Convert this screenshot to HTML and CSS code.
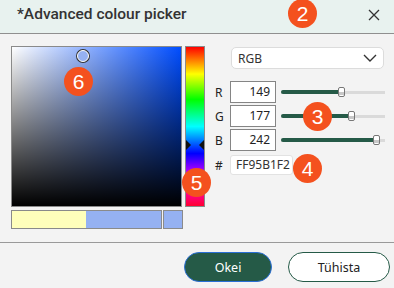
FILE: index.html
```html
<!DOCTYPE html>
<html>
<head>
<meta charset="utf-8">
<link rel="stylesheet" href="styles.css">
</head>
<body>
<div class="dialog">
  <div class="header">
    <div class="title">*Advanced colour picker</div>
    <div class="close">
      <svg width="12" height="12" viewBox="0 0 12 12"><path d="M1 1L11 11M11 1L1 11" stroke="#333" stroke-width="1.3" fill="none"/></svg>
    </div>
  </div>
  <div class="main">
    <div class="left">
      <div class="top">
        <div class="sv">
          <div class="marker" style="left:65px;top:3px"></div>
        </div>
        <div class="hue">
          <div class="arrow arrow-l" style="top:93px"></div>
          <div class="arrow arrow-r" style="top:93px"></div>
        </div>
      </div>
      <div class="preview">
        <div class="compare">
          <div class="old"></div>
          <div class="new"></div>
        </div>
        <div class="swatch"></div>
      </div>
    </div>
    <div class="right">
      <div class="select">
        <span>RGB</span>
        <svg width="14" height="8" viewBox="0 0 14 8"><path d="M1 1L7 7L13 1" stroke="#333" stroke-width="1.4" fill="none"/></svg>
      </div>
      <div class="rows">
        <div class="row">
          <span class="lbl">R</span>
          <div class="num">149</div>
          <div class="slider"><div class="fill" style="width:58%"></div><div class="thumb" style="left:57px"></div></div>
        </div>
        <div class="row">
          <span class="lbl">G</span>
          <div class="num">177</div>
          <div class="slider"><div class="fill" style="width:69%"></div><div class="thumb" style="left:67px"></div></div>
        </div>
        <div class="row">
          <span class="lbl">B</span>
          <div class="num">242</div>
          <div class="slider"><div class="fill" style="width:93%"></div><div class="thumb" style="left:92px"></div></div>
        </div>
        <div class="row hexrow">
          <span class="lbl">#</span>
          <div class="hex">FF95B1F2</div>
        </div>
      </div>
    </div>
  </div>
  <div class="footer">
    <button class="btn ok">Okei</button>
    <button class="btn cancel">Tühista</button>
  </div>
  <div class="badge b2">2</div>
  <div class="badge b3">3</div>
  <div class="badge b4">4</div>
  <div class="badge b5">5</div>
  <div class="badge b6">6</div>
</div>
</body>
</html>
```

FILE: styles.css
```css
* { box-sizing: border-box; }
html, body { margin: 0; padding: 0; }
body {
  width: 394px;
  height: 288px;
  overflow: hidden;
  background: #f3f3f3;
  font-family: "Noto Sans", "Open Sans", sans-serif;
  color: #222;
}
.dialog {
  position: relative;
  width: 394px;
  height: 288px;
  display: flex;
  flex-direction: column;
}
.header {
  height: 34px;
  background: #e8f2ef;
  border-bottom: 1px solid #8f8f8f;
  display: flex;
  align-items: center;
  justify-content: space-between;
  padding: 0 14px 0 17px;
  flex: none;
}
.title {
  font-family: Roboto, "Liberation Sans", sans-serif;
  font-weight: 500;
  font-size: 15.5px;
  color: #333;
  margin-top: -6px;
}
.close {
  width: 12px;
  height: 12px;
  display: flex;
  margin-top: -4px;
}
.main {
  height: 209px;
  border-bottom: 1px solid #999;
  display: flex;
  padding: 12px 0 0 11px;
  flex: none;
}
.left {
  display: flex;
  flex-direction: column;
  gap: 3px;
}
.top {
  display: flex;
  gap: 3px;
}
.sv {
  position: relative;
  width: 171px;
  height: 161px;
  border: 1px solid #8a8a8a;
  background:
    linear-gradient(to top, #000, rgba(0,0,0,0)),
    linear-gradient(to right, #fff, rgb(0,77,255));
}
.marker {
  position: absolute;
  width: 12px;
  height: 12px;
  border-radius: 50%;
  background: #95b1f2;
  border: 1px solid #fff;
  box-shadow: 0 0 0 1px #333;
}
.hue {
  position: relative;
  width: 20px;
  height: 161px;
  border: 1px solid #8a8a8a;
  background: linear-gradient(to bottom, #ff0000 0%, #ffff00 17%, #00ff00 33%, #00ffff 50%, #0000ff 67%, #ff00ff 83%, #ff0030 100%);
}
.arrow {
  position: absolute;
  width: 0;
  height: 0;
  border-top: 5px solid transparent;
  border-bottom: 5px solid transparent;
}
.arrow-l { left: 0; border-left: 5px solid #111; }
.arrow-r { right: 0; border-right: 5px solid #111; }
.preview {
  display: flex;
  gap: 1px;
  height: 19px;
}
.compare {
  width: 151px;
  display: flex;
  border: 1px solid #8a8a8a;
}
.old { width: 74px; background: #ffffbb; }
.new { flex: 1; background: #95b1f2; }
.swatch {
  width: 20px;
  background: #95b1f2;
  border: 1px solid #8a8a8a;
}
.right {
  margin-left: 10px;
  display: flex;
  flex-direction: column;
  padding-top: 1px;
}
.select {
  margin-left: 16px;
  width: 153px;
  height: 22px;
  background: #fff;
  border: 1px solid #dcdcdc;
  border-radius: 5px;
  display: flex;
  align-items: center;
  justify-content: space-between;
  padding: 0 6px 0 6px;
  font-size: 12px;
  color: #333;
}
.rows {
  margin-top: 12px;
  display: flex;
  flex-direction: column;
  gap: 2px;
}
.row {
  display: flex;
  align-items: center;
  height: 22px;
}
.lbl {
  width: 15px;
  font-size: 12px;
  color: #222;
  padding-left: 0;
}
.num {
  width: 46px;
  height: 22px;
  background: #fff;
  border: 1px solid #858585;
  text-align: right;
  padding-right: 5px;
  font-size: 12px;
  line-height: 20px;
  color: #222;
}
.slider {
  position: relative;
  margin-left: 5px;
  width: 104px;
  height: 3px;
  background: #dadada;
}
.fill {
  position: absolute;
  left: 0;
  top: -0.5px;
  height: 4px;
  background: #255a47;
  border-radius: 2px;
}
.thumb {
  position: absolute;
  top: -4px;
  width: 7px;
  height: 10px;
  border: 1px solid #777;
  border-radius: 2px;
  background: linear-gradient(to bottom, #fff 45%, #c8c8c8 45%, #c8c8c8 85%, #fff 85%);
}
.hexrow {
  margin-top: 2px;
  height: 20px;
}
.hex {
  width: 63px;
  height: 20px;
  background: #fff;
  border: 1px solid #e2e2e2;
  border-radius: 3px;
  padding-left: 5px;
  font-size: 12px;
  line-height: 18px;
  color: #333;
}
.footer {
  display: flex;
  justify-content: flex-end;
  gap: 16px;
  padding: 9px 4px 0 0;
}
.btn {
  height: 30px;
  border-radius: 15px;
  font-family: "Noto Sans", "Open Sans", sans-serif;
  font-size: 12.5px;
  padding: 0;
}
.ok {
  width: 88px;
  background: #255a47;
  color: #fff;
  border: 1px solid #2a6fd6;
}
.cancel {
  width: 102px;
  background: #fff;
  color: #222;
  border: 1px solid #255a47;
}
.badge {
  position: absolute;
  width: 29px;
  height: 29px;
  border-radius: 50%;
  background: #f4511e;
  color: #fff;
  font-family: "Liberation Sans", Arial, sans-serif;
  font-size: 21px;
  display: flex;
  align-items: center;
  justify-content: center;
}
.b2 { left: 288px; top: -1px; }
.b3 { left: 303px; top: 102px; }
.b4 { left: 293px; top: 154px; }
.b5 { left: 182px; top: 168px; }
.b6 { left: 64px; top: 67px; }
```
